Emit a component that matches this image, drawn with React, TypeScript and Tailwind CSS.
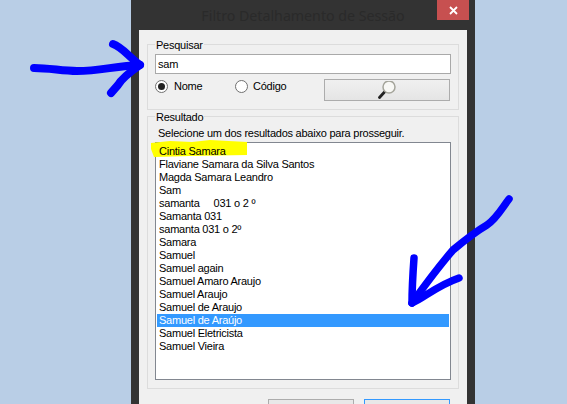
const rows = [
  "Cintia Samara",
  "Flaviane Samara da Silva Santos",
  "Magda Samara Leandro",
  "Sam",
  "samanta     031 o 2 º",
  "Samanta 031",
  "samanta 031 o 2º",
  "Samara",
  "Samuel",
  "Samuel again",
  "Samuel Amaro Araujo",
  "Samuel Araujo",
  "Samuel de Araujo",
  "Samuel de Araújo",
  "Samuel Eletricista",
  "Samuel Vieira",
];

function Radio({ checked }: { checked?: boolean }) {
  return (
    <span className="flex h-[13px] w-[13px] items-center justify-center rounded-full border border-[#707070] bg-white">
      {checked && <span className="h-[7px] w-[7px] rounded-full bg-[#222]" />}
    </span>
  );
}

export default function App() {
  return (
    <div className="relative h-[404px] w-[567px] overflow-hidden bg-[#b9cee6] font-['Liberation_Sans',sans-serif] text-[11px] leading-[13px] tracking-[-0.24px] text-black">
      <div className="ml-[131px] flex h-[404px] w-[344px] flex-col bg-[#333333]">
        <div className="relative flex h-[30px] shrink-0 items-center justify-center font-['Noto_Sans',sans-serif] text-[14.2px] tracking-normal text-[#2a2a2a]">
          <span className="pt-[1px]">Filtro Detalhamento de Sessão</span>
          <div className="absolute right-[6px] top-0 flex h-[20px] w-[32px] items-center justify-center bg-[#c75050]">
            <svg width="9" height="9" viewBox="0 0 9 9">
              <path d="M1 1 8 8M8 1 1 8" stroke="white" strokeWidth="1.8" />
            </svg>
          </div>
        </div>
        <div className="mx-[8px] flex flex-1 flex-col bg-[#f0f0f0] px-[8px] pt-[14px]">
          <div className="relative flex h-[66px] shrink-0 flex-col border border-[#dcdcdc] px-[7px] pt-[9px]">
            <span className="absolute left-[7px] top-[-6px] bg-[#f0f0f0] px-[1px]">Pesquisar</span>
            <div className="flex h-[20px] items-center border border-[#a9a9a9] bg-white pl-[2px]">sam</div>
            <div className="mt-[5px] flex items-start">
              <div className="mt-[1px] flex w-[80px] items-center gap-[6px]">
                <Radio checked />
                <span>Nome</span>
              </div>
              <div className="mt-[1px] flex w-[89px] items-center gap-[5px]">
                <Radio />
                <span>Código</span>
              </div>
              <div className="flex h-[22px] w-[126px] items-center justify-center border border-[#acacac] bg-gradient-to-b from-[#f0f0f0] to-[#e5e5e5]">
                <svg width="20" height="18" viewBox="0 0 20 18">
                  <path d="M7.5 11 2.5 16.5" stroke="#222" strokeWidth="2.8" strokeLinecap="round" />
                  <circle cx="12" cy="6" r="6" fill="#f8f8f5" stroke="#a5a59b" strokeWidth="1.5" />
                </svg>
              </div>
            </div>
          </div>
          <div className="relative mt-[6px] flex h-[273px] shrink-0 flex-col border border-[#dcdcdc] px-[7px] pt-[10px]">
            <span className="absolute left-[7px] top-[-6px] bg-[#f0f0f0] px-[1px]">Resultado</span>
            <div className="pl-[3px]">Selecione um dos resultados abaixo para prosseguir.</div>
            <div className="relative mt-[2px] h-[238px] border border-[#828790] bg-white p-[1px] pt-[2px]">
              <svg className="absolute left-[-5px] top-[-3px]" width="100" height="19" viewBox="0 0 100 19">
                <path d="M0 3 19 1 41 2 59 0 96 2 96 15 39 16 3 17 0 9Z" fill="#ffff00" />
              </svg>
              {rows.map((r, i) => (
                <div
                  key={i}
                  className={`relative h-[13px] whitespace-pre pl-[2px] leading-[13px] ${i === 13 ? "bg-[#3399ff] text-white" : ""}`}
                >
                  {r}
                </div>
              ))}
            </div>
          </div>
          <div className="mt-[10px] flex shrink-0 justify-end gap-[10px] pr-[9px]">
            <div className="h-[22px] w-[86px] border border-[#acacac] bg-[#e8e8e8]" />
            <div className="h-[22px] w-[86px] border border-[#3399ff] bg-[#e8e8e8]" />
          </div>
        </div>
      </div>
      <svg className="absolute left-0 top-0" width="567" height="404" viewBox="0 0 567 404" fill="none">
        <g stroke="#0000ff" strokeLinecap="round" strokeLinejoin="round">
          <path d="M34 68C50 68 62 71 77 71 100 71 115 66 140 65" strokeWidth="8" />
          <path d="M113 44C122 47 128 56 140 65 130 72 122 78 118 85L111 93" strokeWidth="8" />
          <path d="M509 199C502 208 497 218 487 225 475 232 465 240 453 250 440 265 425 285 412 303" strokeWidth="7.5" />
          <path d="M414 258C413 272 412 290 412 303 424 298 436 286 459 278" strokeWidth="7.5" />
        </g>
      </svg>
    </div>
  );
}
